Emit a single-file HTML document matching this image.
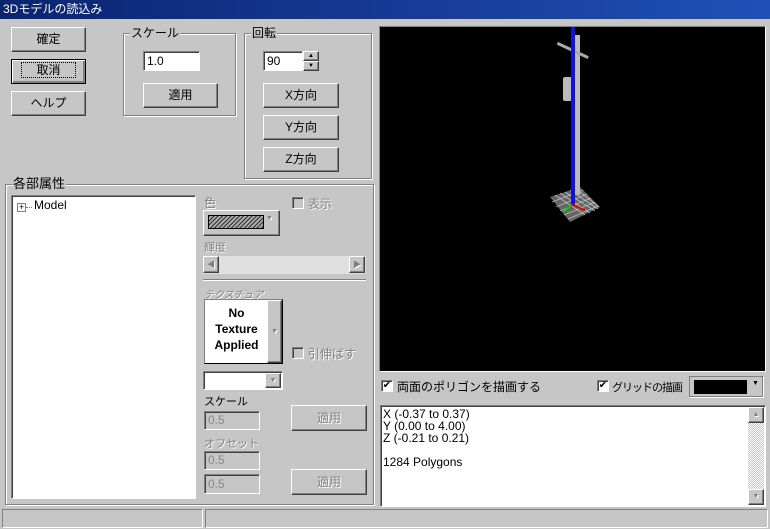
<!DOCTYPE html>
<html><head><meta charset="utf-8"><style>
*{box-sizing:border-box}
body{margin:0;width:770px;height:529px;background:#c6c6c6;font-family:"Liberation Sans","Noto Sans CJK JP",sans-serif;font-size:12px;position:relative;overflow:hidden;color:#000}
.a{position:absolute}
.title{left:0;top:0;width:770px;height:19px;background:linear-gradient(90deg,#0a2470,#2050b8);color:#fff;font-size:12px;line-height:19px;padding-left:3px}
.btn{position:absolute;background:#c6c6c6;border:1px solid;border-color:#fff #404040 #404040 #fff;box-shadow:inset -1px -1px #808080;text-align:center;font-size:12px}
.dis{color:#808080;text-shadow:1px 1px #fff}
.grp{position:absolute;border:1px solid #808080;box-shadow:1px 1px #fff,inset 1px 1px #fff}
.gl{position:absolute;background:#c6c6c6;padding:0 1px;top:-8px;left:6px;line-height:14px}
.edit{position:absolute;background:#fff;border:1px solid;border-color:#808080 #fff #fff #808080;box-shadow:inset 1px 1px #404040;padding-left:3px;font-size:12px}
.edit.d{background:#c6c6c6;color:#888}
.cb{position:absolute;width:12px;height:12px;background:#fff;border:1px solid;border-color:#808080 #fff #fff #808080;box-shadow:inset 1px 1px #404040;font-size:10px;line-height:10px;text-align:center}
.cb.d{background:#c6c6c6}
</style></head><body>
<div class="a title">3Dモデルの読込み</div>

<div class="btn" style="left:11px;top:27px;width:75px;height:25px;line-height:23px">確定</div>
<div class="btn" style="left:11px;top:59px;width:75px;height:25px;line-height:21px;border:1px solid #000;box-shadow:inset 1px 1px #fff,inset -2px -2px #808080"><span style="outline:1px dotted #000;padding:0 14px">取消</span></div>
<div class="btn" style="left:11px;top:91px;width:75px;height:25px;line-height:23px">ヘルプ</div>

<div class="grp" style="left:123px;top:33px;width:113px;height:83px"><span class="gl">スケール</span></div>
<div class="edit" style="left:143px;top:51px;width:57px;height:20px;line-height:18px">1.0</div>
<div class="btn" style="left:143px;top:83px;width:75px;height:25px;line-height:23px">適用</div>

<div class="grp" style="left:244px;top:33px;width:128px;height:146px"><span class="gl">回転</span></div>
<div class="edit" style="left:263px;top:51px;width:40px;height:20px;line-height:18px">90</div>
<div class="btn" style="left:303px;top:51px;width:16px;height:10px;font-size:6px;line-height:8px">▲</div>
<div class="btn" style="left:303px;top:61px;width:16px;height:10px;font-size:6px;line-height:8px">▼</div>
<div class="btn" style="left:263px;top:83px;width:76px;height:25px;line-height:23px">X方向</div>
<div class="btn" style="left:263px;top:115px;width:76px;height:25px;line-height:23px">Y方向</div>
<div class="btn" style="left:263px;top:147px;width:76px;height:25px;line-height:23px">Z方向</div>

<div class="grp" style="left:5px;top:184px;width:369px;height:321px"><span class="gl" style="font-size:13px">各部属性</span></div>
<div class="edit" style="left:11px;top:195px;width:185px;height:304px;padding:0"></div>
<div class="a" style="left:17px;top:203px;width:9px;height:9px;border:1px solid #808080;background:#fff;font-size:9px;line-height:7px;text-align:center">+</div>
<div class="a" style="left:26px;top:207px;width:6px;border-top:1px dotted #808080"></div>
<div class="a" style="left:34px;top:198px;font-size:12px">Model</div>

<div class="a dis" style="left:204px;top:194px">色</div>
<div class="btn" style="left:203px;top:210px;width:77px;height:26px"><div class="a" style="left:4px;top:4px;width:56px;height:14px;border:1px solid #000;background:repeating-linear-gradient(135deg,#333 0 1px,#aaa 1px 3px)"></div><div class="a dis" style="left:62px;top:4px;font-size:7px">▼</div></div>
<div class="cb d" style="left:292px;top:197px"></div><div class="a dis" style="left:308px;top:195px">表示</div>
<div class="a dis" style="left:204px;top:239px;font-size:11px">輝度</div>
<div class="a" style="left:203px;top:256px;width:163px;height:18px;background:#e0e0e0"></div>
<div class="btn dis" style="left:203px;top:256px;width:16px;height:17px;font-size:8px;line-height:15px">◀</div>
<div class="btn dis" style="left:349px;top:256px;width:16px;height:17px;font-size:8px;line-height:15px">▶</div>
<div class="a" style="left:203px;top:279px;width:163px;border-top:1px solid #808080;border-bottom:1px solid #fff"></div>
<div class="a dis" style="left:204px;top:286px;font-size:10px;font-style:italic">テクスチュア</div>
<div class="a" style="left:204px;top:299px;width:79px;height:65px;background:#fff;border:1px solid;border-color:#808080 #000 #000 #808080;font-weight:bold;font-size:12px;text-align:center;line-height:16px;padding:5px 14px 0 0">No<br>Texture<br>Applied</div>
<div class="btn dis" style="left:267px;top:300px;width:15px;height:63px;font-size:7px;line-height:61px">▼</div>
<div class="cb d" style="left:292px;top:347px"></div><div class="a dis" style="left:308px;top:345px">引伸ばす</div>
<div class="edit" style="left:203px;top:371px;width:80px;height:19px"></div>
<div class="btn dis" style="left:265px;top:373px;width:16px;height:15px;font-size:7px;line-height:13px">▼</div>
<div class="a" style="left:204px;top:393px;font-size:11px">スケール</div>
<div class="edit d" style="left:204px;top:411px;width:56px;height:19px;line-height:17px">0.5</div>
<div class="btn dis" style="left:291px;top:405px;width:76px;height:26px;line-height:24px">適用</div>
<div class="a dis" style="left:204px;top:435px;font-size:11px">オフセット</div>
<div class="edit d" style="left:204px;top:451px;width:56px;height:19px;line-height:17px">0.5</div>
<div class="edit d" style="left:204px;top:474px;width:56px;height:20px;line-height:18px">0.5</div>
<div class="btn dis" style="left:291px;top:469px;width:76px;height:26px;line-height:24px">適用</div>

<div class="a" style="left:379px;top:26px;width:387px;height:346px;background:#000;border:1px solid;border-color:#808080 #fff #fff #808080">
<svg width="385" height="344" class="a" style="left:0;top:0">
<polygon points="170,170 200,160 220,180 190,195" fill="#666"/>
<g stroke="#ddd" stroke-width="0.6">
<line x1="175" y1="168" x2="205" y2="188"/><line x1="180" y1="166" x2="210" y2="186"/><line x1="185" y1="165" x2="215" y2="184"/><line x1="190" y1="163" x2="218" y2="182"/><line x1="195" y1="161" x2="219" y2="180"/>
<line x1="172" y1="175" x2="203" y2="163"/><line x1="176" y1="180" x2="207" y2="167"/><line x1="180" y1="184" x2="211" y2="171"/><line x1="184" y1="188" x2="215" y2="175"/><line x1="188" y1="192" x2="218" y2="179"/></g>
<rect x="194" y="8" width="6" height="160" fill="#bbb"/>
<rect x="176" y="22" width="34" height="3" fill="#aaa" transform="rotate(25 193 23)"/>
<rect x="183" y="50" width="10" height="24" fill="#bbb" rx="2"/>
<rect x="191" y="0" width="4" height="178" fill="#1010e0"/>
<line x1="192" y1="178" x2="183" y2="185" stroke="#0c0" stroke-width="2"/>
<line x1="192" y1="178" x2="205" y2="183" stroke="#e00" stroke-width="2"/>
</svg></div>

<div class="cb" style="left:381px;top:380px">✔</div><div class="a" style="left:397px;top:378px">両面のポリゴンを描画する</div>
<div class="cb" style="left:597px;top:380px">✔</div><div class="a" style="left:612px;top:379px;font-size:11px;letter-spacing:-1px;white-space:nowrap;width:76px;overflow:hidden">グリッドの描画</div>
<div class="btn" style="left:689px;top:376px;width:75px;height:22px;border-color:#808080 #fff #fff #808080"><div class="a" style="left:4px;top:3px;width:53px;height:14px;background:#000"></div><div class="a" style="left:62px;top:3px;font-size:7px">▼</div></div>

<div class="edit" style="left:380px;top:405px;width:386px;height:102px;padding:2px 2px;font-size:12px;line-height:12px">X (-0.37 to 0.37)<br>Y (0.00 to 4.00)<br>Z (-0.21 to 0.21)<br><br>1284 Polygons</div>
<div class="a" style="left:748px;top:407px;width:16px;height:98px;background:repeating-conic-gradient(#fff 0 25%,#c6c6c6 0 50%) 0 0/2px 2px"></div>
<div class="btn dis" style="left:748px;top:407px;width:16px;height:16px;font-size:7px;line-height:14px">▲</div>
<div class="btn dis" style="left:748px;top:489px;width:16px;height:16px;font-size:7px;line-height:14px">▼</div>

<div class="a" style="left:2px;top:509px;width:201px;height:19px;border:1px solid;border-color:#808080 #fff #fff #808080"></div>
<div class="a" style="left:205px;top:509px;width:563px;height:19px;border:1px solid;border-color:#808080 #fff #fff #808080"></div>
</body></html>
